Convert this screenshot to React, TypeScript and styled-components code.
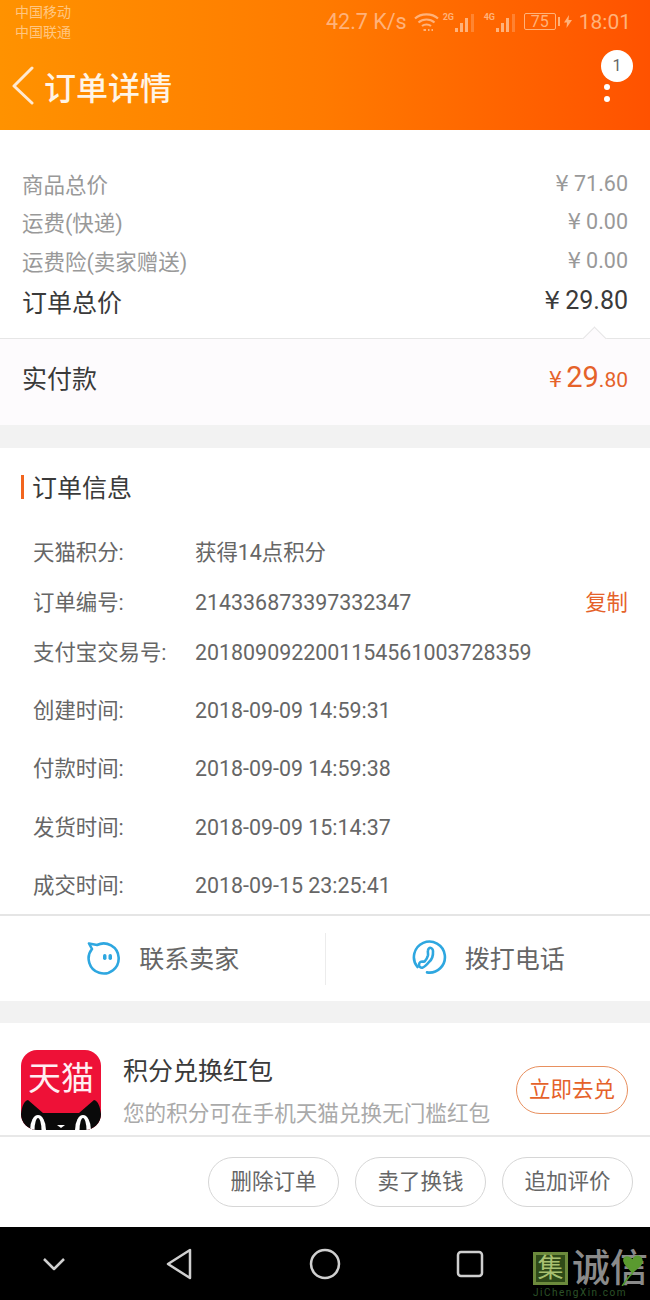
import * as React from 'react';
import styled, { createGlobalStyle } from 'styled-components';

const GlobalStyle = createGlobalStyle`
    html, body {
        margin: 0;
        padding: 0;
        background: #fff;
    }
    * {
        box-sizing: border-box;
    }
    body {
        font-family: Roboto, "Noto Sans CJK SC", sans-serif;
    }
`;

const priceRows = [
    { label: '商品总价', value: '71.60' },
    { label: '运费(快递)', value: '0.00' },
    { label: '运费险(卖家赠送)', value: '0.00' },
];

const infoRows = [
    { label: '天猫积分:', value: '获得14点积分', gap: 0 },
    { label: '订单编号:', value: '214336873397332347', gap: 0, copy: true },
    { label: '支付宝交易号:', value: '2018090922001154561003728359', gap: 0 },
    { label: '创建时间:', value: '2018-09-09 14:59:31', gap: 8 },
    { label: '付款时间:', value: '2018-09-09 14:59:38', gap: 8 },
    { label: '发货时间:', value: '2018-09-09 15:14:37', gap: 9 },
    { label: '成交时间:', value: '2018-09-15 23:25:41', gap: 8 },
];

function WifiIcon() {
    return (
        <svg width="25" height="20" viewBox="0 0 25 20" fill="none" stroke="#ffb27a" strokeWidth="2.2">
            <path d="M1 6.500C7 1 18 1 24 6.500" />
            <path d="M4.500 10.500C9 6.500 16 6.500 20.500 10.500" />
            <path d="M8 14C10.500 12 14.500 12 17 14" />
            <path d="M9.500 18h2.500M14 18h1.500M17.500 18h1.500" />
        </svg>
    );
}

function SignalIcon({ tag }: { tag: string }) {
    return (
        <SignalBox>
            <SignalTag>{tag}</SignalTag>
            <svg width="21" height="18" viewBox="0 0 21 18" fill="#ffb27a">
                <rect x="0" y="14" width="3" height="4" />
                <rect x="5" y="9" width="3" height="9" />
                <rect x="10" y="4" width="3" height="14" />
                <rect x="16" y="0" width="3" height="18" opacity="0.4" />
            </svg>
        </SignalBox>
    );
}

function ChatIcon() {
    return (
        <svg width="36" height="36" viewBox="0 0 36 36" fill="none" stroke="#2ea7e0" strokeWidth="2.600" strokeLinejoin="round">
            <path d="M4 4.500L12 6A15 15 0 1 1 7 10Z" />
            <rect x="18" y="15" width="3.500" height="6" rx="1.700" fill="#2ea7e0" stroke="none" />
            <rect x="23.500" y="15" width="3.500" height="6" rx="1.700" fill="#2ea7e0" stroke="none" />
        </svg>
    );
}

function PhoneCircleIcon() {
    return (
        <svg width="36" height="36" viewBox="0 0 36 36" fill="none" stroke="#2ea7e0" strokeWidth="2.600" strokeLinecap="round" strokeLinejoin="round">
            <path d="M6.500 28A15.500 15.500 0 1 1 16 33.400" />
            <path d="M19.300 8.700C20.500 8.700 22 10.500 22 12C22.300 17 20.500 21 18 23C16 25.500 13.500 28 11.300 28.700C9.500 29 8 27.500 8 26.300C8 24.500 8.500 23.500 9.300 23C10.500 22.300 12.500 23 13.700 22.300C15.500 20.500 16.500 18.500 17 16.300C17.300 14.500 16.500 13 17 11.300C17.300 10 18.300 8.700 19.300 8.700Z" />
        </svg>
    );
}

function TmallLogo() {
    return (
        <LogoBox>
            <LogoText>天猫</LogoText>
            <LogoFace viewBox="0 0 80 30">
                <path d="M0 30V14C1 6 3 1 7 0L22 13H58L73 0C77 1 79 6 80 14V30Z" fill="#0a0a0a" />
                <ellipse cx="17" cy="30" rx="8" ry="15" fill="#fff" />
                <ellipse cx="62" cy="30" rx="8" ry="15" fill="#fff" />
                <ellipse cx="17" cy="31" rx="3.500" ry="13" fill="#0a0a0a" />
                <ellipse cx="62" cy="31" rx="3.500" ry="13" fill="#0a0a0a" />
                <path d="M36 25H44L40 28Z" fill="#fff" />
            </LogoFace>
        </LogoBox>
    );
}

export default function App() {
    return (
        <Page>
            <GlobalStyle />
            <Header>
                <StatusBar>
                    <Carriers>
                        <span>中国移动</span>
                        <span>中国联通</span>
                    </Carriers>
                    <StatusRight>
                        <Speed>42.7 K/s</Speed>
                        <WifiIcon />
                        <SignalIcon tag="2G" />
                        <SignalIcon tag="4G" />
                        <Battery>75</Battery>
                        <BatteryTip />
                        <Bolt width="8" height="13" viewBox="0 0 8 13" fill="#ffb27a">
                            <path d="M5 0L0 7.500H3L2.500 13L8 5H4.500Z" />
                        </Bolt>
                        <Clock>18:01</Clock>
                    </StatusRight>
                </StatusBar>
                <TitleBar>
                    <svg width="24" height="40" viewBox="0 0 24 40" fill="none" stroke="#ffe9d2" strokeWidth="3" strokeLinecap="round" strokeLinejoin="round">
                        <path d="M21 2L3 20L21 37" />
                    </svg>
                    <Title>订单详情</Title>
                    <MoreDots>
                        <Dot />
                        <Dot />
                    </MoreDots>
                    <Badge>1</Badge>
                </TitleBar>
            </Header>

            <PriceSection>
                {priceRows.map((row) => (
                    <PriceRow key={row.label}>
                        <span>{row.label}</span>
                        <PriceValue><Yen>¥</Yen>{row.value}</PriceValue>
                    </PriceRow>
                ))}
                <TotalRow>
                    <span>订单总价</span>
                    <PriceValue><Yen>¥</Yen>29.80</PriceValue>
                </TotalRow>
            </PriceSection>

            <PaidRow>
                <span>实付款</span>
                <PaidAmount>
                    <PaidYen>¥</PaidYen>
                    <PaidBig>29</PaidBig>
                    <PaidSmall>.80</PaidSmall>
                </PaidAmount>
            </PaidRow>

            <InfoSection>
                <SectionTitle>订单信息</SectionTitle>
                {infoRows.map((row) => (
                    <InfoRow key={row.label} $gap={row.gap}>
                        <InfoLabel>{row.label}</InfoLabel>
                        <InfoValue>{row.value}</InfoValue>
                        {row.copy && <CopyLink>复制</CopyLink>}
                    </InfoRow>
                ))}
            </InfoSection>

            <ContactBar>
                <ContactItem>
                    <ChatIcon />
                    <span>联系卖家</span>
                </ContactItem>
                <ContactDivider />
                <ContactItem>
                    <PhoneCircleIcon />
                    <span>拨打电话</span>
                </ContactItem>
            </ContactBar>

            <Promo>
                <TmallLogo />
                <PromoText>
                    <PromoTitle>积分兑换红包</PromoTitle>
                    <PromoDesc>您的积分可在手机天猫兑换无门槛红包</PromoDesc>
                </PromoText>
                <PromoButton>立即去兑</PromoButton>
            </Promo>

            <ActionBar>
                <ActionButton>删除订单</ActionButton>
                <ActionButton>卖了换钱</ActionButton>
                <ActionButton>追加评价</ActionButton>
            </ActionBar>

            <NavBar>
                <NavSlot>
                    <svg width="26" height="26" viewBox="0 0 26 26" fill="none" stroke="#cfcfcf" strokeWidth="2.500" strokeLinejoin="round">
                        <path d="M3 8L13 18L23 8" />
                    </svg>
                </NavSlot>
                <NavSlot>
                    <svg width="30" height="34" viewBox="0 0 30 34" fill="none" stroke="#cfcfcf" strokeWidth="2.500" strokeLinejoin="round">
                        <path d="M25 3V31L3 17Z" />
                    </svg>
                </NavSlot>
                <NavSlot>
                    <svg width="32" height="32" viewBox="0 0 32 32" fill="none" stroke="#cfcfcf" strokeWidth="2.500">
                        <circle cx="16" cy="16" r="14" />
                    </svg>
                </NavSlot>
                <NavSlot>
                    <svg width="28" height="28" viewBox="0 0 28 28" fill="none" stroke="#cfcfcf" strokeWidth="2.500">
                        <rect x="2" y="2" width="24" height="24" rx="3" />
                    </svg>
                </NavSlot>
                <Watermark>
                    <WatermarkTop>
                        <WatermarkSeal>集</WatermarkSeal>
                        <WatermarkName>诚信</WatermarkName>
                    </WatermarkTop>
                    <WatermarkUrl>JiChengXin.com</WatermarkUrl>
                    <WatermarkLeaf viewBox="0 0 24 32">
                        <path d="M2 32C6 26 9 22 12 20" stroke="#4f9a2c" strokeWidth="1.500" fill="none" />
                        <path d="M12 20C8 15 4 12 3 8C2 3 8 1 12 6C14 0 22 2 22 8C22 13 15 16 12 20Z" fill="#5a9a2f" />
                    </WatermarkLeaf>
                </Watermark>
            </NavBar>
        </Page>
    );
}

const Page = styled.div`
    width: 650px;
    height: 1300px;
    display: flex;
    flex-direction: column;
    background: #f2f2f2;
    overflow: hidden;
`;

const Header = styled.header`
    height: 130px;
    flex: none;
    display: flex;
    flex-direction: column;
    background: linear-gradient(90deg, #ff9200 0%, #ff7a00 50%, #ff5200 100%);
`;

const StatusBar = styled.div`
    height: 45px;
    display: flex;
    justify-content: space-between;
    padding: 2px 19px 0 15px;
`;

const Carriers = styled.div`
    display: flex;
    flex-direction: column;
    font-size: 14px;
    line-height: 20px;
    color: #ffc680;
`;

const StatusRight = styled.div`
    height: 39px;
    display: flex;
    align-items: center;
    color: #ffb27a;
`;

const Speed = styled.span`
    font-size: 21.500px;
    margin-right: 7px;
`;

const SignalBox = styled.span`
    display: inline-flex;
    align-items: flex-end;
    height: 20px;
    margin-left: 4px;
    & + & {
        margin-left: 8px;
    }
`;

const SignalTag = styled.span`
    align-self: flex-start;
    width: 12px;
    font-size: 9px;
    font-weight: 700;
    line-height: 10px;
`;

const Battery = styled.span`
    width: 32px;
    height: 17px;
    margin-left: 7px;
    border: 1px solid #ffb27a;
    border-radius: 2px;
    font-size: 16px;
    line-height: 15px;
    text-align: center;
`;

const BatteryTip = styled.span`
    width: 2px;
    height: 9px;
    margin-left: 2px;
    background: #ffb27a;
`;

const Bolt = styled.svg`
    margin-left: 4px;
`;

const Clock = styled.span`
    font-size: 21px;
    margin-left: 7px;
`;

const TitleBar = styled.div`
    position: relative;
    flex: 1;
    display: flex;
    align-items: center;
    padding: 0 0 4px 11px;
`;

const Title = styled.h1`
    margin: 0 0 0 9px;
    font-size: 32px;
    font-weight: 500;
    color: #fff4e6;
`;

const MoreDots = styled.div`
    margin-left: auto;
    margin-right: 40px;
    display: flex;
    flex-direction: column;
    gap: 6px;
    padding-top: 15px;
`;

const Dot = styled.span`
    width: 6px;
    height: 6px;
    border-radius: 50%;
    background: #fff;
`;

const Badge = styled.span`
    position: absolute;
    top: 5px;
    right: 17px;
    width: 32px;
    height: 32px;
    border-radius: 50%;
    background: #fff;
    color: #666;
    font-size: 16px;
    line-height: 32px;
    text-align: center;
`;

const PriceSection = styled.section`
    height: 208px;
    flex: none;
    padding: 34px 22px 0;
    background: #fff;
`;

const PriceRow = styled.div`
    height: 38.500px;
    display: flex;
    justify-content: space-between;
    align-items: center;
    font-size: 21.500px;
    color: #999;
`;

const TotalRow = styled(PriceRow)`
    height: 42px;
    font-size: 25px;
    color: #3a3a3a;
`;

const PriceValue = styled.span`
    display: inline-flex;
    align-items: baseline;
`;

const Yen = styled.span`
    margin-right: 5px;
    font-family: "DejaVu Sans", sans-serif;
`;

const PaidRow = styled.div`
    position: relative;
    height: 87px;
    flex: none;
    display: flex;
    justify-content: space-between;
    align-items: center;
    padding: 0 22px 10px;
    background: #fdfbfd;
    border-top: 1px solid #e6e6e6;
    font-size: 25px;
    color: #3a3a3a;

    &::before {
        content: '';
        position: absolute;
        top: -9px;
        right: 47px;
        width: 16px;
        height: 16px;
        background: #fdfbfd;
        border-top: 1px solid #e6e6e6;
        border-left: 1px solid #e6e6e6;
        transform: rotate(45deg);
    }
`;

const PaidAmount = styled.span`
    display: inline-flex;
    align-items: baseline;
    color: #e5622a;
`;

const PaidYen = styled.span`
    margin-right: 4px;
    font-family: "DejaVu Sans", sans-serif;
    font-size: 21px;
`;

const PaidBig = styled.span`
    font-size: 29px;
`;

const PaidSmall = styled.span`
    font-size: 21px;
`;

const InfoSection = styled.section`
    height: 466px;
    flex: none;
    margin-top: 23px;
    background: #fff;
    padding-top: 27px;
`;

const SectionTitle = styled.h2`
    margin: 0 0 29px 21px;
    padding-left: 8px;
    height: 24px;
    border-left: 3px solid #f2651e;
    font-size: 25px;
    line-height: 28px;
    font-weight: 400;
    color: #3a3a3a;
`;

const InfoRow = styled.div<{ $gap: number }>`
    height: 50px;
    margin-top: ${(p) => p.$gap}px;
    display: flex;
    align-items: center;
    padding: 0 22px 0 33px;
    font-size: 21.400px;
    line-height: 30px;
    color: #666;
`;

const InfoLabel = styled.span`
    width: 162px;
    flex: none;
`;

const InfoValue = styled.span`
    flex: 1;
`;

const CopyLink = styled.span`
    color: #e5622a;
`;

const ContactBar = styled.div`
    height: 87px;
    flex: none;
    display: flex;
    align-items: center;
    background: #fff;
    border-top: 2px solid #e5e5e5;
`;

const ContactItem = styled.div`
    flex: 1;
    display: flex;
    justify-content: center;
    align-items: center;
    gap: 18px;
    padding-bottom: 4px;
    font-size: 25px;
    color: #666;
`;

const ContactDivider = styled.div`
    width: 1px;
    height: 52px;
    background: #ececec;
`;

const Promo = styled.section`
    height: 112px;
    flex: none;
    margin-top: 22px;
    padding: 27px 22px 0 21px;
    display: flex;
    align-items: flex-start;
    background: #fff;
    overflow: hidden;
`;

const LogoBox = styled.div`
    position: relative;
    width: 80px;
    height: 80px;
    flex: none;
    border-radius: 16px;
    background: #ee1137;
    overflow: hidden;
    text-align: center;
`;

const LogoText = styled.span`
    display: block;
    font-size: 33px;
    line-height: 40px;
    padding-top: 9px;
    color: #ffeef2;
    white-space: nowrap;
`;

const LogoFace = styled.svg`
    position: absolute;
    left: 0;
    bottom: 0;
    width: 80px;
    height: 30px;
`;

const PromoText = styled.div`
    flex: 1;
    margin-left: 22px;
`;

const PromoTitle = styled.div`
    margin-top: 4px;
    font-size: 25px;
    line-height: 36px;
    color: #3a3a3a;
`;

const PromoDesc = styled.div`
    margin-top: 9px;
    font-size: 21.600px;
    line-height: 30px;
    color: #aaa;
    white-space: nowrap;
`;

const PromoButton = styled.div`
    margin-top: 16px;
    width: 112px;
    height: 48px;
    border: 1px solid #e8905f;
    border-radius: 24px;
    color: #e5622a;
    font-size: 21.500px;
    line-height: 46px;
    text-align: center;
`;

const ActionBar = styled.div`
    height: 92px;
    flex: none;
    display: flex;
    justify-content: flex-end;
    align-items: center;
    gap: 16px;
    padding-right: 17px;
    background: #fff;
    border-top: 2px solid #e8e8e8;
`;

const ActionButton = styled.div`
    width: 131px;
    height: 50px;
    border: 1px solid #d6d6d6;
    border-radius: 25px;
    font-size: 21.500px;
    line-height: 48px;
    text-align: center;
    color: #666;
`;

const NavBar = styled.nav`
    position: relative;
    flex: 1;
    display: grid;
    grid-template-columns: 107px 145px 145px 145px;
    align-items: center;
    justify-items: center;
    background: #000;
`;

const NavSlot = styled.div`
    display: flex;
`;

const Watermark = styled.div`
    position: absolute;
    left: 533px;
    top: 25px;
    width: 117px;
`;

const WatermarkTop = styled.div`
    display: flex;
    align-items: center;
    gap: 4px;
`;

const WatermarkSeal = styled.span`
    width: 35px;
    height: 33px;
    border: 3px solid #6c8a3c;
    background: #2f4a18;
    color: #a9c071;
    font-size: 26px;
    line-height: 26px;
    text-align: center;
`;

const WatermarkName = styled.span`
    font-size: 38px;
    line-height: 33px;
    font-weight: 500;
    color: #8a8a8a;
    white-space: nowrap;
`;

const WatermarkUrl = styled.div`
    margin-top: 2px;
    font-size: 10px;
    line-height: 12px;
    letter-spacing: 1.500px;
    color: #2c5228;
    white-space: nowrap;
`;

const WatermarkLeaf = styled.svg`
    position: absolute;
    left: 87px;
    top: 1px;
    width: 25px;
    height: 33px;
`;
